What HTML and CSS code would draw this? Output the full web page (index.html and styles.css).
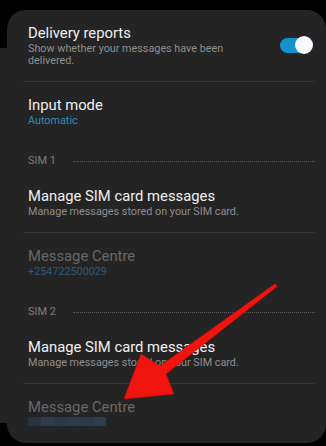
FILE: index.html
```html
<!DOCTYPE html>
<html lang="en">
<head>
  <meta charset="UTF-8">
  <meta name="viewport" content="width=device-width, initial-scale=1.0">
  <title>More settings</title>
  <link rel="stylesheet" href="styles.css">
</head>
<body>

  <div class="settings-card">
    <div class="setting-item first">
      <div class="setting-text">
        <div class="setting-title">Delivery reports</div>
        <div class="setting-sub">Show whether your messages have been<br>delivered.</div>
      </div>
      <div class="toggle on"><span class="toggle-thumb"></span></div>
    </div>
    <div class="divider"></div>

    <div class="setting-item">
      <div class="setting-text">
        <div class="setting-title">Input mode</div>
        <div class="setting-sub accent">Automatic</div>
      </div>
    </div>

    <div class="sim-header">SIM 1</div>
    <div class="setting-item">
      <div class="setting-text">
        <div class="setting-title">Manage SIM card messages</div>
        <div class="setting-sub">Manage messages stored on your SIM card.</div>
      </div>
    </div>
    <div class="divider"></div>
    <div class="setting-item disabled">
      <div class="setting-text">
        <div class="setting-title">Message Centre</div>
        <div class="setting-sub accent">+254722500029</div>
      </div>
    </div>

    <div class="sim-header">SIM 2</div>
    <div class="setting-item">
      <div class="setting-text">
        <div class="setting-title">Manage SIM card messages</div>
        <div class="setting-sub">Manage messages stored on your SIM card.</div>
      </div>
    </div>
    <div class="divider"></div>
    <div class="setting-item disabled last">
      <div class="setting-text">
        <div class="setting-title">Message Centre</div>
        <div class="blurred-number">
          <span></span><span></span><span></span><span></span><span></span><span></span>
        </div>
      </div>
    </div>
  </div>

  <!-- red pointer drawn over the screenshot -->
  <svg class="pointer-arrow" width="326" height="446" viewBox="0 0 326 446">
    <polygon fill="#f0140f" stroke="#c80c0a" stroke-width="0.6" stroke-linejoin="round"
      points="275,283.8 160,366 141,354 124,399 174,394 166,374 277.2,286.4"/>
  </svg>

</body>
</html>
```

FILE: styles.css
```css
body {
  font-family: Roboto, 'Noto Sans', sans-serif;
  margin: 0;
  width: 326px;
  height: 446px;
  overflow: hidden;
  position: relative;
  background: linear-gradient(to bottom, #000 48px, #242424 48px, #242424 423px, #000 423px);
}

.settings-card {
  margin: 10px 0 0 7px;
  height: 433px;
  background-color: #242424;
  border-radius: 19px;
  box-sizing: border-box;
}

.setting-item {
  display: flex;
  align-items: center;
  padding: 14px 14px 14px 21px;
}

.setting-text {
  flex: 1;
}

.setting-title {
  font-size: 14.8px;
  line-height: 18px;
  color: #f0f0f0;
}

.setting-sub {
  font-size: 10.8px;
  line-height: 12px;
  margin-top: 1px;
  color: #8e8e8e;
}
.setting-sub.accent {
  color: #2f8ebb;
}

.disabled .setting-title {
  color: #686868;
}
.disabled .setting-sub.accent {
  color: #2a5b76;
}

.divider {
  height: 1px;
  margin: 0 11px 0 16px;
  background-color: #363636;
}

.sim-header {
  display: flex;
  align-items: center;
  padding: 14px 11px 6px 21px;
  font-size: 11px;
  line-height: 12px;
  color: #7c7c7c;
}
.sim-header::after {
  content: '';
  flex: 1;
  margin-left: 17px;
  border-top: 1px dotted #5a5a5a;
}

.toggle {
  width: 32px;
  height: 15px;
  border-radius: 8px;
  background-color: #1592cd;
  display: flex;
  align-items: center;
  justify-content: flex-end;
  margin-top: -1px;
}
.toggle-thumb {
  width: 18px;
  height: 18px;
  border-radius: 50%;
  background-color: #f7fbff;
  margin-right: -1px;
}

.blurred-number {
  display: flex;
  height: 9px;
  margin-top: 1px;
}
.blurred-number span {
  width: 13px;
  background-color: #273440;
}
.blurred-number span:nth-child(2) { background-color: #2d3d4b; }
.blurred-number span:nth-child(3) { background-color: #293947; }
.blurred-number span:nth-child(4) { background-color: #2c3c4a; }
.blurred-number span:nth-child(5) { background-color: #2a3a47; }
.blurred-number span:nth-child(6) { background-color: #2e3e4c; }

.pointer-arrow {
  position: absolute;
  left: 0;
  top: 0;
  pointer-events: none;
}
```
